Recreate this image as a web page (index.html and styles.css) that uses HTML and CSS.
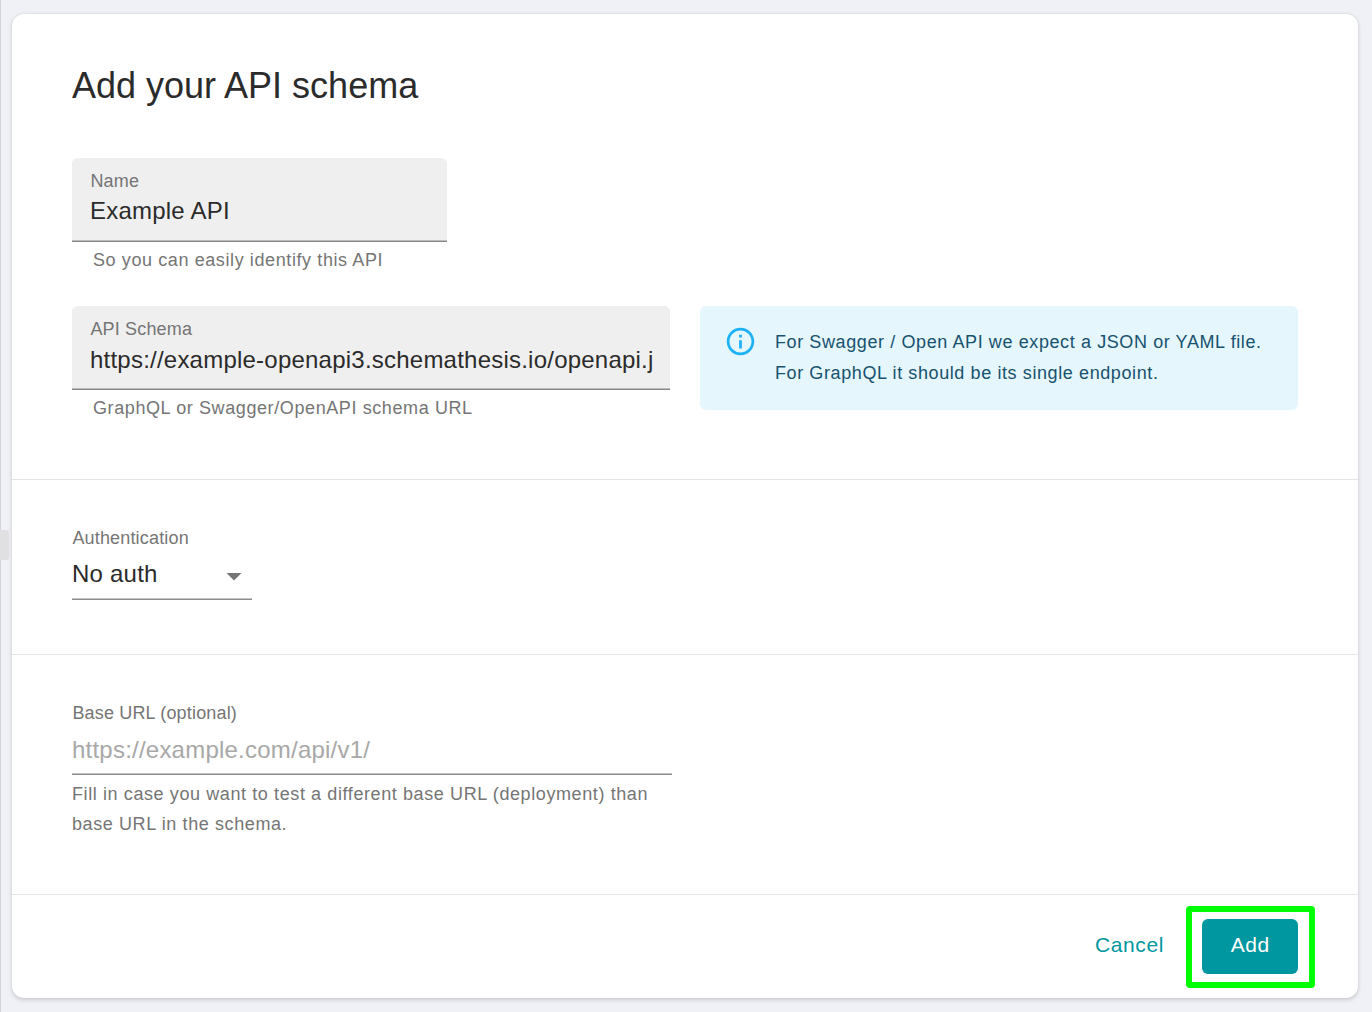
FILE: index.html
```html
<!DOCTYPE html>
<html lang="en">
<head>
<meta charset="utf-8">
<title>Add your API schema</title>
<link rel="stylesheet" href="styles.css">
</head>
<body>
<div class="drawer-handle"></div>
<main class="card">
  <section class="section section-schema">
    <h1 class="title">Add your API schema</h1>
    <div class="field field-name">
      <div class="filled">
        <label class="label">Name</label>
        <div class="value">Example API</div>
      </div>
      <p class="helper">So you can easily identify this API</p>
    </div>
    <div class="row">
      <div class="field field-schema">
        <div class="filled">
          <label class="label">API Schema</label>
          <div class="value value-low">https://example-openapi3.schemathesis.io/openapi.j</div>
        </div>
        <p class="helper">GraphQL or Swagger/OpenAPI schema URL</p>
      </div>
      <div class="alert">
        <svg class="alert-icon" viewBox="0 0 24 24"><path d="M11 7h2v2h-2zm0 4h2v6h-2zm1-9C6.48 2 2 6.48 2 12s4.480 10 10 10 10-4.480 10-10S17.520 2 12 2zm0 18c-4.410 0-8-3.590-8-8s3.590-8 8-8 8 3.590 8 8-3.590 8-8 8z"/></svg>
        <div class="alert-text">For Swagger / Open API we expect a JSON or YAML file.<br>For GraphQL it should be its single endpoint.</div>
      </div>
    </div>
  </section>
  <section class="section section-auth">
    <label class="label">Authentication</label>
    <div class="select">
      <span>No auth</span>
      <svg class="arrow" viewBox="0 0 24 24"><path d="M7 10l5 5 5-5z"/></svg>
    </div>
  </section>
  <section class="section section-url">
    <label class="label">Base URL (optional)</label>
    <div class="plain-input">https://example.com/api/v1/</div>
    <p class="helper helper-flush">Fill in case you want to test a different base URL (deployment) than base URL in the schema.</p>
  </section>
  <footer class="footer">
    <button class="button cancel">Cancel</button>
    <div class="highlight"><button class="button add">Add</button></div>
  </footer>
</main>
</body>
</html>
```
FILE: styles.css
```css
* {
  box-sizing: border-box;
}

body {
  margin: 0;
  height: 1012px;
  padding: 14px 13.6px 14px 11.4px;
  border-left: 1px solid #d2d2d8;
  background: #f0f1f6;
  font-family: "Liberation Sans", Arial, sans-serif;
  color: #2b2b2b;
  overflow: hidden;
}

.drawer-handle {
  position: absolute;
  left: 0;
  top: 530px;
  width: 9.4px;
  height: 30px;
  border-radius: 0 3px 3px 0;
  background: #e0e0e3;
}

.card {
  display: flex;
  flex-direction: column;
  height: 984px;
  border-radius: 12px;
  background: #fff;
  box-shadow: 0 1.5px 4px rgba(0, 0, 0, 0.16), 0 0 1.5px rgba(0, 0, 0, 0.08);
}

.section {
  padding: 0 60px 0 59.6px;
  border-bottom: 1px solid #e5e5e8;
}

.section-schema {
  height: 466px;
  padding-top: 48px;
}

.section-auth {
  height: 175px;
  padding-top: 45px;
}

.section-url {
  height: 240px;
  padding-top: 45px;
}

.title {
  margin: 0 0 48px;
  font-size: 36px;
  font-weight: 400;
  line-height: 48px;
}

.field-name {
  width: 375px;
  margin-bottom: 31px;
}

.field-schema {
  width: 598.4px;
}

.row {
  display: flex;
  align-items: flex-start;
  gap: 30px;
}

.filled {
  height: 84px;
  padding: 10px 18px 0;
  border-bottom: 1px solid #868686;
  border-radius: 6px 6px 0 0;
  background: #efefef;
  box-shadow: inset 0 -1px #bcbcbc;
}

.label {
  display: block;
  padding-left: 0.4px;
  font-size: 18px;
  line-height: 27px;
  letter-spacing: 0.17px;
  color: #757575;
}

.value {
  font-size: 24px;
  line-height: 32px;
  letter-spacing: 0.225px;
  white-space: nowrap;
}

.value-low {
  padding-top: 1px;
}

.helper {
  margin: 3px 0 0 21px;
  font-size: 18px;
  line-height: 30px;
  letter-spacing: 0.6px;
  color: #757575;
}

.alert {
  display: flex;
  flex: 1;
  height: 104px;
  padding: 19px 24px;
  border-radius: 6px;
  background: #e5f6fd;
}

.alert-icon {
  flex: none;
  width: 33px;
  height: 33px;
  margin-right: 17.6px;
  fill: #1cb2f5;
}

.alert-text {
  padding-top: 2px;
  font-size: 18px;
  line-height: 31px;
  letter-spacing: 0.6px;
  white-space: nowrap;
  color: #17526f;
}

.select {
  display: flex;
  justify-content: space-between;
  width: 180.5px;
  height: 48px;
  border-bottom: 1px solid #8c8c8c;
  box-shadow: inset 0 -1px #c4c4c4;
  font-size: 24px;
  line-height: 44px;
  letter-spacing: 0.225px;
}

.arrow {
  width: 36px;
  height: 36px;
  margin-top: 6px;
  fill: #757575;
}

.plain-input {
  width: 600px;
  height: 48px;
  border-bottom: 1px solid #8c8c8c;
  box-shadow: inset 0 -1px #c4c4c4;
  font-size: 24px;
  line-height: 46px;
  letter-spacing: 0.225px;
  color: #a8a8a8;
}

.helper-flush {
  width: 600px;
  margin: 4px 0 0;
}

.footer {
  display: flex;
  justify-content: flex-end;
  align-items: flex-start;
  padding: 11px 43.4px 0 0;
}

.button {
  padding: 0;
  border: 0;
  background: none;
  font: 21px "Liberation Sans", Arial, sans-serif;
  letter-spacing: 0.6px;
}

.cancel {
  height: 55px;
  margin: 11px 22px 0 0;
  color: #0097a0;
}

.highlight {
  width: 129px;
  height: 82px;
  padding: 7px 10.3px;
  border: 6px solid #00ff00;
  border-radius: 4px;
}

.add {
  width: 96px;
  height: 55px;
  padding-bottom: 4px;
  border-radius: 6px;
  background: #0097a0;
  color: #fff;
}
```
